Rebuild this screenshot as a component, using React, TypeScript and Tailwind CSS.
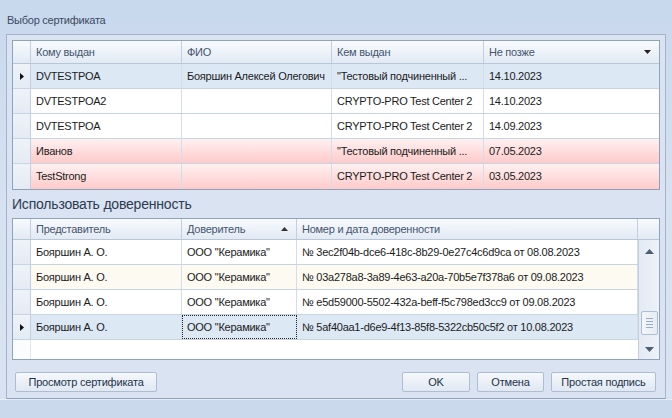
import React from 'react';

const topRows = [
  { to: 'DVTESTPOA', fio: 'Бояршин Алексей Олегович', by: '"Тестовый подчиненный ...', date: '14.10.2023', kind: 'sel' },
  { to: 'DVTESTPOA2', fio: '', by: 'CRYPTO-PRO Test Center 2', date: '14.10.2023', kind: 'ok' },
  { to: 'DVTESTPOA', fio: '', by: 'CRYPTO-PRO Test Center 2', date: '14.09.2023', kind: 'ok' },
  { to: 'Иванов', fio: '', by: '"Тестовый подчиненный ...', date: '07.05.2023', kind: 'bad' },
  { to: 'TestStrong', fio: '', by: 'CRYPTO-PRO Test Center 2', date: '03.05.2023', kind: 'bad' }
];

const poaRows = [
  { who: 'Бояршин А. О.', from: 'ООО "Керамика"', num: '№ 3ec2f04b-dce6-418c-8b29-0e27c4c6d9ca от 08.08.2023', kind: 'ok' },
  { who: 'Бояршин А. О.', from: 'ООО "Керамика"', num: '№ 03a278a8-3a89-4e63-a20a-70b5e7f378a6 от 09.08.2023', kind: 'alt' },
  { who: 'Бояршин А. О.', from: 'ООО "Керамика"', num: '№ e5d59000-5502-432a-beff-f5c798ed3cc9 от 09.08.2023', kind: 'ok' },
  { who: 'Бояршин А. О.', from: 'ООО "Керамика"', num: '№ 5af40aa1-d6e9-4f13-85f8-5322cb50c5f2 от 10.08.2023', kind: 'sel' }
];

const RowMark = () => (
  <svg width="4" height="7" viewBox="0 0 4 7"><path d="M0 0 L4 3.5 L0 7 Z" fill="#111" /></svg>
);

const headCell = 'h-full flex items-center px-[5px] border-r border-[#c3cfde] text-[#44556f] whitespace-nowrap overflow-hidden';
const cell = 'h-full flex items-center px-[5px] border-r border-[#d4dde9] whitespace-nowrap overflow-hidden';

const rowBg = (kind: string) =>
  kind === 'sel'
    ? 'bg-[#dde8f5]'
    : kind === 'bad'
    ? 'bg-linear-to-b from-[#fdf1f1] to-[#ffcaca]'
    : kind === 'alt'
    ? 'bg-[#fdfaf1]'
    : 'bg-white';

const Btn = ({ children, w }: { children: React.ReactNode; w: string }) => (
  <button className={`${w} h-[20px] border border-[#aebdd2] rounded-[2px] bg-linear-to-b from-[#f5f8fc] to-[#e0e8f2] text-[#22324a] text-[11px] tracking-[-0.2px] flex items-center justify-center`}>
    {children}
  </button>
);

export default function App() {
  return (
    <div className="w-[672px] h-[418px] overflow-hidden flex flex-col bg-linear-to-b from-[#c8d8ed] via-[#d7e2f1] to-[#d9e3f1] font-['Liberation_Sans',Arial,sans-serif] text-[11px] tracking-[-0.25px] text-[#1b1b1b]">
      <div className="h-[34px] pl-[7px] pt-[13px] text-[#3a4a62] leading-[14px]">Выбор сертификата</div>

      {/* group panel */}
      <div className="mx-[6px] h-[365px] border border-[#a3b4cb] border-b-[#8fa3bf] bg-[#d9e3f1] px-[5px] pt-[5px] flex flex-col">
        {/* certificates grid */}
        <div className="w-[648px] border border-[#8ea2bd] bg-white">
          <div className="h-[23px] flex bg-linear-to-b from-[#f8fafd] to-[#e2eaf4] border-b border-[#b7c6d9]">
            <div className="w-[18px] h-full border-r border-[#c3cfde]" />
            <div className={`${headCell} w-[151px]`}>Кому выдан</div>
            <div className={`${headCell} w-[150px]`}>ФИО</div>
            <div className={`${headCell} w-[152px]`}>Кем выдан</div>
            <div className="h-full flex-1 flex items-center justify-between px-[5px] text-[#44556f]">
              <span>Не позже</span>
              <svg width="7" height="4" viewBox="0 0 7 4" className="mr-[3px]"><path d="M0 0 L7 0 L3.5 4 Z" fill="#222" /></svg>
            </div>
          </div>
          {topRows.map((r, i) => (
            <div key={i} className={`h-[25px] flex ${i < topRows.length - 1 ? 'border-b border-[#c9d4e2]' : ''}`}>
              <div className="w-[18px] h-full flex items-center justify-center bg-linear-to-b from-[#eef3f9] to-[#e4ebf4] border-r border-[#c3cfde]">
                {r.kind === 'sel' && <RowMark />}
              </div>
              <div className={`flex flex-1 h-full ${rowBg(r.kind)}`}>
                <div className={`${cell} w-[151px]`}>{r.to}</div>
                <div className={`${cell} w-[150px]`}>{r.fio}</div>
                <div className={`${cell} w-[152px]`}>{r.by}</div>
                <div className="h-full flex-1 flex items-center px-[5px]">{r.date}</div>
              </div>
            </div>
          ))}
        </div>

        <div className="h-[28px] flex items-center text-[14px] tracking-[-0.2px] text-[#2d3b52] pt-[1px]">Использовать доверенность</div>

        {/* power of attorney grid */}
        <div className="w-[648px] border border-[#8ea2bd] bg-white">
          <div className="h-[21px] flex bg-linear-to-b from-[#f8fafd] to-[#e2eaf4] border-b border-[#b7c6d9]">
            <div className="w-[18px] h-full border-r border-[#c3cfde]" />
            <div className={`${headCell} w-[151px]`}>Представитель</div>
            <div className={`${headCell} w-[115px] justify-between`}>
              <span>Доверитель</span>
              <svg width="7" height="4" viewBox="0 0 7 4" className="mr-[3px]"><path d="M0 4 L7 4 L3.5 0 Z" fill="#333" /></svg>
            </div>
            <div className={`${headCell} flex-1`}>Номер и дата доверенности</div>
            <div className="w-[21px] h-full" />
          </div>
          <div className="h-[119px] flex">
            <div className="flex-1 flex flex-col">
              {poaRows.map((r, i) => (
                <div key={i} className="h-[25px] flex border-b border-[#c9d4e2]">
                  <div className="w-[18px] h-full flex items-center justify-center bg-linear-to-b from-[#eef3f9] to-[#e4ebf4] border-r border-[#c3cfde]">
                    {r.kind === 'sel' && <RowMark />}
                  </div>
                  <div className={`flex flex-1 h-full ${rowBg(r.kind)}`}>
                    <div className={`${cell} w-[151px]`}>{r.who}</div>
                    <div className={`w-[115px] h-full flex items-center px-[4px] whitespace-nowrap overflow-hidden ${r.kind === 'sel' ? 'border border-dotted border-[#222]' : 'border-r border-[#d4dde9] pl-[5px]'}`}>{r.from}</div>
                    <div className={`${cell} flex-1`}>{r.num}</div>
                  </div>
                </div>
              ))}
              <div className="flex-1 flex">
                <div className="w-[18px] h-full bg-[#fbfcfe] border-r border-[#e1e7f0]" />
                <div className="flex-1 bg-white" />
              </div>
            </div>
            {/* scrollbar */}
            <div className="w-[21px] h-full bg-linear-to-r from-[#e4eaf3] to-[#edf2f8] border-l border-[#c3cfde] flex flex-col items-center">
              <div className="h-[22px] w-full flex items-center justify-center">
                <svg width="9" height="5" viewBox="0 0 9 5"><path d="M0 5 L9 5 L4.5 0 Z" fill="#4d5d75" /></svg>
              </div>
              <div className="flex-1" />
              <div className="w-[17px] h-[24px] mb-[5px] rounded-[2px] border border-[#aebdd2] bg-linear-to-r from-[#f3f6fa] to-[#e6ecf4] flex flex-col items-center justify-center gap-[2px]">
                <div className="w-[7px] h-px bg-[#9aabc2]" />
                <div className="w-[7px] h-px bg-[#9aabc2]" />
                <div className="w-[7px] h-px bg-[#9aabc2]" />
                <div className="w-[7px] h-px bg-[#9aabc2]" />
              </div>
              <div className="h-[19px] w-full flex items-center justify-center">
                <svg width="9" height="5" viewBox="0 0 9 5"><path d="M0 0 L9 0 L4.5 5 Z" fill="#4d5d75" /></svg>
              </div>
            </div>
          </div>
        </div>

        {/* buttons */}
        <div className="flex items-center mt-[12px] pl-[3px] pr-[4px]">
          <Btn w="w-[142px]">Просмотр сертификата</Btn>
          <div className="flex-1" />
          <div className="flex gap-[7px]">
            <Btn w="w-[68px]">OK</Btn>
            <Btn w="w-[67px]">Отмена</Btn>
            <Btn w="w-[105px]">Простая подпись</Btn>
          </div>
        </div>
      </div>

      <div className="flex-1 border-t border-[#e6edf7] bg-[#cbd9ec]" />
    </div>
  );
}
